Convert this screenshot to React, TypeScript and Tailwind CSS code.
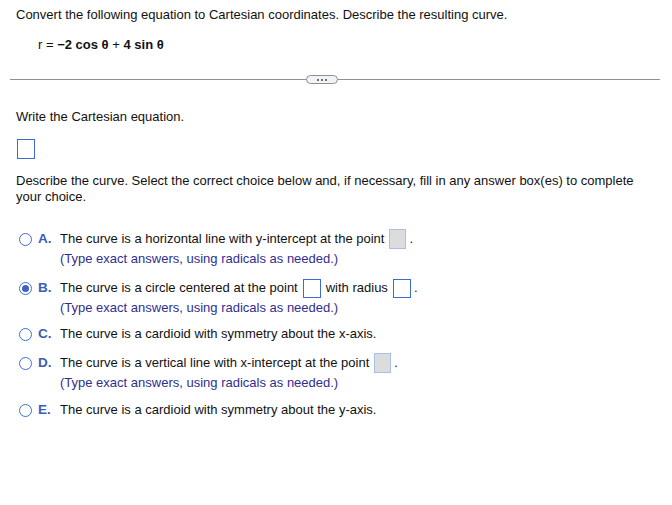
export default function App() {
  const font = { fontFamily: '"Liberation Sans", Arial, sans-serif' };
  return (
    <div className="w-[672px] h-[505px] bg-white text-[13px] text-[#111] overflow-hidden" style={font}>
      <div className="px-4 pt-[7px]">
        <p className="leading-4">Convert the following equation to Cartesian coordinates. Describe the resulting curve.</p>
        <p className="mt-[14px] pl-[22px] leading-4 whitespace-pre">
          <span>r = </span>
          <span className="font-bold">−2 cos θ</span>
          <span> + </span>
          <span className="font-bold">4 sin θ</span>
        </p>
      </div>

      <div className="relative ml-[10px] mt-[22px] w-[650px] h-[9px] flex items-center">
        <div className="w-full h-[1.5px] bg-[#8c9097]" />
        <div className="absolute left-[296px] top-0 w-[32px] h-[9px] rounded-full border border-[#8c9097] bg-[#f2f3f5] flex items-center justify-center gap-[2px]">
          <span className="w-[2px] h-[2px] bg-[#444] rounded-full" />
          <span className="w-[2px] h-[2px] bg-[#444] rounded-full" />
          <span className="w-[2px] h-[2px] bg-[#444] rounded-full" />
        </div>
      </div>

      <div className="px-4">
        <p className="mt-[25px] leading-4">Write the Cartesian equation.</p>
        <div className="mt-[14px] ml-[1px] w-[18px] h-[20px] border-[1.5px] border-[#3a6cd4]" />
        <p className="mt-[14px] leading-4">
          Describe the curve. Select the correct choice below and, if necessary, fill in any answer box(es) to complete your choice.
        </p>

        <div className="mt-[24px]">
          <Option letter="A." hint>
            The curve is a horizontal line with y-intercept at the point<GrayBox />.
          </Option>
          <div className="mt-[10px]">
            <Option letter="B." hint selected>
              The curve is a circle centered at the point<BlueBox />with radius<BlueBox last />.
            </Option>
          </div>
          <div className="mt-[7px]">
            <Option letter="C.">The curve is a cardioid with symmetry about the x-axis.</Option>
          </div>
          <div className="mt-[9px]">
            <Option letter="D." hint>
              The curve is a vertical line with x-intercept at the point<GrayBox />.
            </Option>
          </div>
          <div className="mt-[8px]">
            <Option letter="E.">The curve is a cardioid with symmetry about the y-axis.</Option>
          </div>
        </div>
      </div>
    </div>
  );
}

function Option({ letter, hint, selected, children }: { letter: string; hint?: boolean; selected?: boolean; children: React.ReactNode }) {
  return (
    <div className="flex items-start">
      <div className="h-[20px] flex items-center ml-[3px]">
        <span className="w-[13px] h-[13px] rounded-full border-[1.5px] border-[#3f6fd2] flex items-center justify-center">
          {selected && <span className="w-[7px] h-[7px] rounded-full bg-[#3f5fc4]" />}
        </span>
      </div>
      <div className="h-[20px] flex items-center ml-[6px] w-[22px] font-bold text-[13.5px] text-[#3c5bbd]">{letter}</div>
      <div>
        <div className="h-[20px] flex items-center">{children}</div>
        {hint && <div className="leading-[19px] text-[#2f2f8f]">(Type exact answers, using radicals as needed.)</div>}
      </div>
    </div>
  );
}

function GrayBox() {
  return <span className="inline-block ml-[5px] mr-[3px] w-[17px] h-[20px] bg-[#dcdcdc] border border-[#a9c0e6]" />;
}

function BlueBox({ last }: { last?: boolean }) {
  return (
    <span
      className={
        last
          ? "inline-block ml-[5px] mr-[3px] w-[18px] h-[19px] bg-white border-[1.5px] border-[#3a6cd4]"
          : "inline-block mx-[5px] w-[18px] h-[19px] bg-white border-[1.5px] border-[#3a6cd4]"
      }
    />
  );
}
